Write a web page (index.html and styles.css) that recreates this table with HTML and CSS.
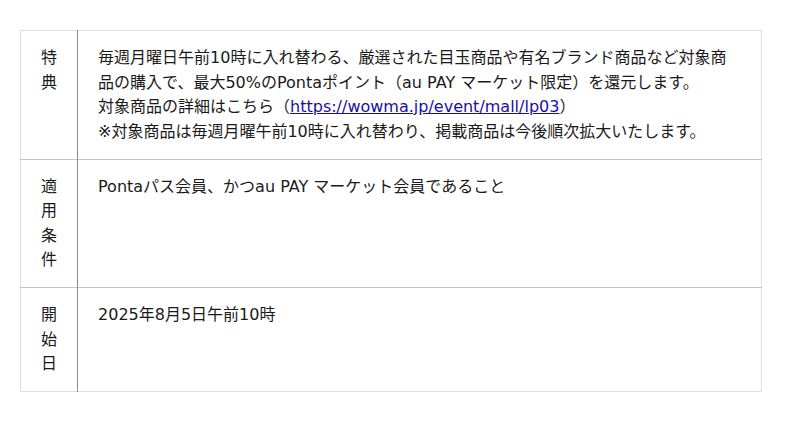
FILE: index.html
```html
<!DOCTYPE html>
<html lang="ja">
<head>
  <meta charset="UTF-8">
  <title>キャンペーン概要</title>
  <meta name="viewport" content="width=device-width, initial-scale=1.0">
  <link rel="stylesheet" href="styles.css">
</head>
<body>

  <table class="info">
    <tr>
      <th>特典</th>
      <td>
        毎週月曜日午前10時に入れ替わる、厳選された目玉商品や有名ブランド商品など対象商品の購入で、最大50%のPontaポイント（au PAY マーケット限定）を還元します。<br>
        対象商品の詳細はこちら（<a href="#">https://wowma.jp/event/mall/lp03</a>）<br>
        ※対象商品は毎週月曜午前10時に入れ替わり、掲載商品は今後順次拡大いたします。
      </td>
    </tr>
    <tr>
      <th>適用条件</th>
      <td>Pontaパス会員、かつau PAY マーケット会員であること</td>
    </tr>
    <tr>
      <th>開始日</th>
      <td>2025年8月5日午前10時</td>
    </tr>
  </table>

</body>
</html>
```

FILE: styles.css
```css
:root {
  --text: #1a1a1a;
  --line: #c4c4c4;
  --outer: #dedede;
  --divider: #8c8c8c;
  --link: #1a0dab;
}

body {
  margin: 0;
  padding: 30px 0 0 20px;
  background: #fff;
  color: var(--text);
  font-family: 'DejaVu Sans', 'Noto Sans CJK JP', sans-serif;
  font-size: 16px;
  line-height: 24.5px;
}

table.info {
  width: 742px;
  border-collapse: collapse;
  border: 1px solid var(--outer);
}

.info th,
.info td {
  padding: 15px 20px 14.5px;
  vertical-align: top;
  text-align: left;
  border-top: 1px solid var(--line);
}

.info tr:first-child th,
.info tr:first-child td {
  border-top: 1px solid var(--outer);
}

.info th {
  width: 16px;
  font-weight: normal;
  text-align: center;
  border-right: 1px solid var(--divider);
}

.info a {
  color: var(--link);
}
```
